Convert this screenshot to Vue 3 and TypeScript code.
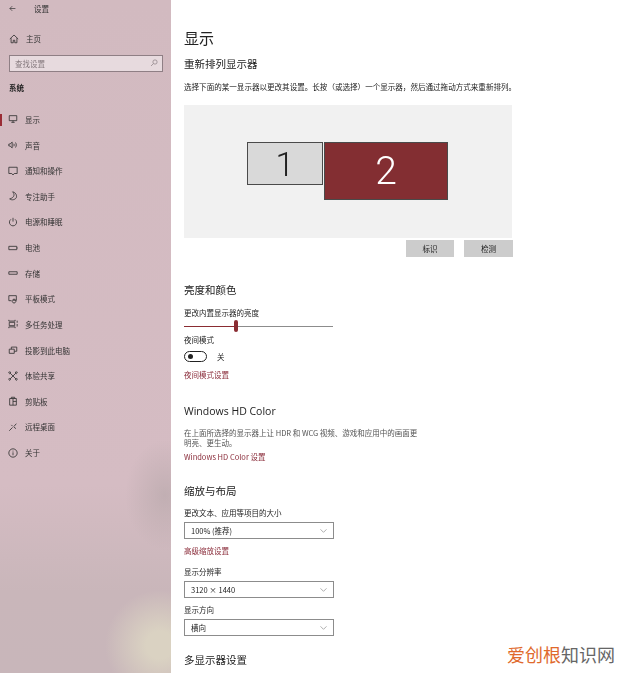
<template>
  <div class="page">
    <aside class="side">
      <div class="top">
        <svg class="back" viewBox="0 0 12 12"><path d="M11 6H1.500M5.500 2 1.500 6l4 4" /></svg>
        <span>设置</span>
      </div>
      <div class="row home">
        <svg class="ico" viewBox="0 0 12 12"><path d="M1 6 6 1.200 11 6M2.500 5v5.500h2.600V7.500h1.800v3h2.600V5" /></svg>
        <span>主页</span>
      </div>
      <div class="search">
        <span>查找设置</span>
        <svg viewBox="0 0 12 12"><circle cx="7.500" cy="4.500" r="3.200" /><path d="M5 7 1.500 10.500" /></svg>
      </div>
      <div class="group">系统</div>
      <nav class="nav">
        <div v-for="item in navItems" :key="item.label" class="row" :class="{ active: item.label === '显示' }">
          <svg class="ico" viewBox="0 0 12 12"><path :d="item.icon" /></svg>
          <span>{{ item.label }}</span>
        </div>
      </nav>
      <div class="shade"></div>
      <div class="glow"></div>
    </aside>

    <main class="main">
      <h1>显示</h1>
      <h2 class="first">重新排列显示器</h2>
      <p class="lead">选择下面的某一显示器以更改其设置。长按（或选择）一个显示器，然后通过拖动方式来重新排列。</p>
      <div class="panel">
        <div class="monitors">
          <div class="mon one">1</div>
          <div class="mon two">2</div>
        </div>
      </div>
      <div class="btns">
        <button>标识</button>
        <button>检测</button>
      </div>

      <h2 class="bright">亮度和颜色</h2>
      <div class="label brightlabel">更改内置显示器的亮度</div>
      <div class="slider">
        <div class="fill" :style="{ width: brightness + '%' }"></div>
        <div class="thumb"></div>
        <div class="rest"></div>
      </div>
      <div class="label night">夜间模式</div>
      <div class="toggle-row">
        <div class="toggle"><i></i></div>
        <span>关</span>
      </div>
      <a class="link nightlink">夜间模式设置</a>

      <h2 class="hd">Windows HD Color</h2>
      <p class="hdtext">在上面所选择的显示器上让 HDR 和 WCG 视频、游戏和应用中的画面更明亮、更生动。</p>
      <a class="link hdlink">Windows HD Color 设置</a>

      <h2 class="scale">缩放与布局</h2>
      <div class="label scalelabel">更改文本、应用等项目的大小</div>
      <div class="select"><span>100% (推荐)</span><svg viewBox="0 0 10 6"><path d="M.5.5 5 5 9.500.5" /></svg></div>
      <a class="link scalelink">高级缩放设置</a>
      <div class="label reslabel">显示分辨率</div>
      <div class="select"><span>3120 × 1440</span><svg viewBox="0 0 10 6"><path d="M.5.5 5 5 9.500.5" /></svg></div>
      <div class="label orilabel">显示方向</div>
      <div class="select"><span>横向</span><svg viewBox="0 0 10 6"><path d="M.5.5 5 5 9.500.5" /></svg></div>
      <h2 class="multi">多显示器设置</h2>
    </main>

    <div class="mark"><b>爱创根</b>知识网</div>
  </div>
</template>

<script setup lang="ts">
interface NavItem {
  label: string
  icon: string
}

const brightness = 33.500

const navItems: NavItem[] = [
  { label: '显示', icon: 'M1.500 2h9v6h-9zM6 8v2M4 10h4' },
  { label: '声音', icon: 'M1 4.800v2.400h1.500L5 9.500v-7L2.500 4.800zM7 4.500c.6 1 .6 2 0 3M9 3c1.200 2 1.200 4 0 6' },
  { label: '通知和操作', icon: 'M1 1.500h10v7.500H7.500L6 10.800 4.500 9H1z' },
  { label: '专注助手', icon: 'M5.500 1c2.800 2.500 2.500 7-3.500 8.500 2.500 2 6.500 1 8-1.500C11 5 9 1.500 5.500 1z' },
  { label: '电源和睡眠', icon: 'M6 1v4.500M3.500 2.800a4.300 4.300 0 1 0 5 0' },
  { label: '电池', icon: 'M1 4h9.500v4H1zM11.200 5.500v1' },
  { label: '存储', icon: 'M1 4.500h10v3H1z' },
  { label: '平板模式', icon: 'M1 2h9v5.500H6M1 2v6h3M7.200 6.200a2.300 2.300 0 1 0 .1 0z' },
  { label: '多任务处理', icon: 'M1 1v1.500h7.500V1M1 11V9.500h7.500V11M1.500 4h6.500v4H1.500zM11 2v2.500M11 6v3' },
  { label: '投影到此电脑', icon: 'M1.500 5h6v5h-6zM4 5V2.500h6.500v5H7.500' },
  { label: '体验共享', icon: 'M2.500 2.500l7 7M9.500 2.500l-7 7M2 1a1 1 0 1 0 .01 0M10 1a1 1 0 1 0 .01 0M2 9a1 1 0 1 0 .01 0M10 9a1 1 0 1 0 .01 0' },
  { label: '剪贴板', icon: 'M2 3h8v8H2zM6 3v8M4 3V1.500h4V3M6 6.500h4' },
  { label: '远程桌面', icon: 'M1.500 10.500 5.500 6.500M7 5.500l3-3.500M7 6l2.500 2M4 3.500 5.500 5' },
  { label: '关于', icon: 'M6 1a5 5 0 1 0 .01 0zM6 5.200v3.500M6 3.200v1' },
]
</script>

<style scoped>
.page {
  position: relative;
  display: flex;
  width: 640px;
  height: 673px;
  overflow: hidden;
  background: #fff;
  color: #222;
  font-family: "Noto Sans CJK SC", "Liberation Sans", sans-serif;
  font-size: 7.500px;
}
.side {
  position: relative;
  flex: 0 0 171px;
  overflow: hidden;
  background: linear-gradient(180deg, #d2bac0 0%, #d5bcc3 72%, #c9b6ba 88%, #c8b6ba 100%);
  filter: blur(.4px);
}
.shade {
  position: absolute;
  left: 125px;
  top: 440px;
  width: 80px;
  height: 110px;
  border-radius: 50%;
  background: radial-gradient(closest-side, rgba(178, 164, 166, .55) 0%, rgba(178, 164, 166, 0) 100%);
}
.glow {
  position: absolute;
  left: 105px;
  top: 590px;
  width: 110px;
  height: 110px;
  border-radius: 50%;
  background: radial-gradient(closest-side, rgba(218, 210, 194, 1) 25%, rgba(218, 210, 194, 0) 100%);
}
.top {
  display: flex;
  align-items: center;
  gap: 18px;
  height: 16px;
  padding-left: 9px;
  color: #333;
}
.back {
  width: 7px;
  height: 7px;
  fill: none;
  stroke: #333;
  stroke-width: 1.200;
}
.row {
  position: relative;
  display: flex;
  align-items: center;
  gap: 7px;
  height: 25.630px;
  padding-left: 8px;
  color: #333;
  z-index: 1;
}
.home {
  margin-top: 10px;
  padding-left: 9px;
}
.ico {
  width: 10px;
  height: 10px;
  flex: none;
  fill: none;
  stroke: #333;
  stroke-width: 1;
}
.row.active::before {
  content: "";
  position: absolute;
  left: 0;
  top: 7px;
  width: 2px;
  height: 12px;
  background: #9a2c35;
}
.search {
  display: flex;
  align-items: center;
  justify-content: space-between;
  box-sizing: border-box;
  width: 154px;
  height: 17px;
  margin: 3px 0 0 9px;
  padding: 0 4px 0 5px;
  border: 1px solid #8f7f85;
  background: #e7dade;
  color: #85797d;
  z-index: 1;
}
.search svg {
  width: 8px;
  height: 8px;
  fill: none;
  stroke: #85797d;
  stroke-width: 1;
}
.group {
  margin: 10px 0 0 9px;
  height: 12px;
  line-height: 12px;
  font-weight: 700;
  color: #222;
}
.nav {
  margin-top: 13px;
}
.main {
  flex: 1;
  padding-left: 13px;
  filter: blur(.35px);
}
h1 {
  margin: 27px 0 0;
  height: 22px;
  line-height: 22px;
  font-size: 15px;
  font-weight: 400;
  color: #222;
}
h2 {
  margin: 0;
  height: 16px;
  line-height: 16px;
  font-size: 10.500px;
  font-weight: 400;
  color: #222;
}
h2.first { margin-top: 7px; }
.lead {
  margin: 9px 0 0;
  height: 12px;
  line-height: 12px;
  white-space: nowrap;
  font-size: 7.550px;
  color: #222;
}
.panel {
  display: flex;
  box-sizing: border-box;
  width: 328px;
  height: 133px;
  margin-top: 12px;
  padding: 37px 0 0 63px;
  background: #f1f1f1;
}
.monitors {
  display: flex;
  align-items: flex-start;
  gap: 1px;
}
.mon {
  display: flex;
  align-items: center;
  justify-content: center;
  box-sizing: border-box;
  border: 1px solid #4a4a4a;
  font-family: Roboto, "Open Sans", sans-serif;
  font-weight: 300;
}
.one {
  width: 76px;
  height: 43px;
  background: #d9d9d9;
  color: #222;
  font-size: 34px;
}
.two {
  width: 124px;
  height: 58px;
  background: #832e32;
  color: #fff;
  font-size: 39px;
}
.btns {
  display: flex;
  justify-content: flex-end;
  gap: 10px;
  width: 329px;
  margin-top: 2px;
}
button {
  width: 48px;
  height: 17px;
  padding: 0;
  border: 0;
  background: #cccccc;
  color: #222;
  font: inherit;
}
button:last-child { width: 49px; }
.bright { margin-top: 25px; }
.label {
  height: 12px;
  line-height: 12px;
  color: #222;
}
.brightlabel { margin-top: 9px; }
.slider {
  display: flex;
  align-items: center;
  width: 149px;
  height: 12px;
  margin-top: 1px;
}
.fill {
  height: 1px;
  background: #8a2c32;
}
.thumb {
  flex: none;
  width: 4px;
  height: 12px;
  border-radius: 2px;
  background: #8a2c32;
}
.rest {
  flex: 1;
  height: 1px;
  background: #8c8c8c;
}
.night { margin-top: 2px; }
.toggle-row {
  display: flex;
  align-items: center;
  gap: 10px;
  height: 12px;
  margin-top: 4px;
}
.toggle {
  display: flex;
  align-items: center;
  box-sizing: border-box;
  width: 23px;
  height: 11px;
  padding-left: 3px;
  border: 1px solid #222;
  border-radius: 6px;
}
.toggle i {
  width: 5px;
  height: 5px;
  border-radius: 50%;
  background: #222;
}
.link {
  display: block;
  height: 12px;
  line-height: 12px;
  color: #8a2c3a;
}
.nightlink { margin-top: 7px; }
.hd {
  margin-top: 22px;
  font-family: "Open Sans", "Liberation Sans", sans-serif;
}
.hdtext {
  width: 236px;
  margin: 9px 0 0;
  line-height: 10px;
  color: #555;
}
.hdlink { margin-top: 3px; }
.scale { margin-top: 20px; }
.scalelabel { margin-top: 8px; }
.select {
  display: flex;
  align-items: center;
  justify-content: space-between;
  box-sizing: border-box;
  width: 150px;
  height: 17px;
  margin-top: 3px;
  padding: 0 6px;
  border: 1px solid #8c8c8c;
  color: #222;
}
.select svg {
  width: 7px;
  height: 4px;
  fill: none;
  stroke: #666;
  stroke-width: .8;
}
.scalelink { margin-top: 6px; }
.reslabel { margin-top: 9px; }
.orilabel { margin-top: 6px; }
.multi { margin-top: 16px; }
.mark {
  position: absolute;
  left: 507px;
  top: 642px;
  font-size: 18px;
  line-height: 24px;
  color: #666;
  white-space: nowrap;
}
.mark b {
  font-weight: 400;
  color: #e0692c;
}
</style>
